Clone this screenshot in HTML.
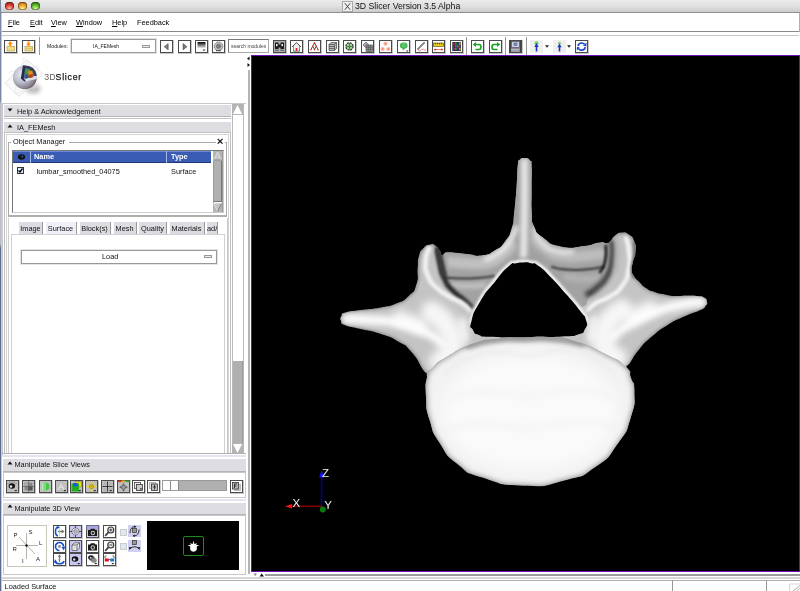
<!DOCTYPE html>
<html><head><meta charset="utf-8"><title>3D Slicer Version 3.5 Alpha</title>
<style>
html,body{margin:0;padding:0;}
body{width:800px;height:591px;overflow:hidden;background:#fff;position:relative;font-family:"Liberation Sans",sans-serif;font-size:7.35px;color:#111;}
.a{position:absolute;box-sizing:border-box;}
.t{position:absolute;white-space:nowrap;line-height:10px;will-change:opacity;}
#titlebar{left:0;top:0;width:800px;height:13px;background:linear-gradient(#ebebeb,#e0e0e0 50%,#cccccc);border-bottom:1px solid #8e8e8e;}
.tl{position:absolute;top:1.8px;width:8.6px;height:8.6px;border-radius:50%;box-shadow:0 0 0 0.7px rgba(40,20,20,.55) inset;}
#view3d{left:251px;top:55px;width:549px;height:517px;background:#000;border:1px solid #6a12b6;}
.bar{position:absolute;box-sizing:border-box;background:#dedee2;border-bottom:1px solid #b4b4b8;}
.tb{position:absolute;box-sizing:border-box;width:13px;height:13px;border:1px solid #4a4a4a;background:#fff;box-shadow:0.5px 0.5px 0 0.5px #c8c8c8;}
.sep{position:absolute;width:1px;background:#9a9a9a;}
.vl{position:absolute;width:1px;}
.hl{position:absolute;height:1px;}
.tab{position:absolute;box-sizing:border-box;top:222px;height:12px;background:#dcdce2;border-right:1px solid #9a9a9a;text-align:center;line-height:12px;}
</style></head><body>
<div id="titlebar" class="a"></div>
<div class="tl" style="left:5.4px;background:radial-gradient(circle at 50% 85%,#ffc0b0,#d8382c 50%,#6a1410);"></div>
<div class="tl" style="left:18.2px;background:radial-gradient(circle at 50% 85%,#fff4a0,#eca020 50%,#864808);"></div>
<div class="tl" style="left:31px;background:radial-gradient(circle at 50% 85%,#e0ffa0,#54b428 50%,#1c5408);"></div>
<svg class="a" style="left:342px;top:1px" width="11" height="11" viewBox="0 0 11 11"><rect x="0.5" y="0.5" width="10" height="10" fill="#f0f0f0" stroke="#a8a8a8" stroke-width="1"/><path d="M2.8 2.2 L8.2 8.8 M8.2 2.2 L2.8 8.8" stroke="#333" stroke-width="0.9"/></svg>
<div class="t" style="left:355px;top:1px;font-size:8.7px;line-height:11px;">3D Slicer Version 3.5 Alpha</div>
<div class="a" style="left:0;top:0;width:1px;height:591px;background:linear-gradient(#7a88a4 0,#7a88a4 100px,#b8bcc8 104px,#b8bcc8 244px,#5a6c92 248px,#5a6c92 591px);"></div>
<div class="a" style="left:1px;top:13px;width:1px;height:578px;background:#c8ccd4;"></div>
<div class="t" style="left:8px;top:17.8px;color:#000;"><u>F</u>ile</div>
<div class="t" style="left:30px;top:17.8px;color:#000;"><u>E</u>dit</div>
<div class="t" style="left:51px;top:17.8px;color:#000;"><u>V</u>iew</div>
<div class="t" style="left:76px;top:17.8px;color:#000;"><u>W</u>indow</div>
<div class="t" style="left:112px;top:17.8px;color:#000;"><u>H</u>elp</div>
<div class="t" style="left:137px;top:17.8px;color:#000;">Feedback</div>
<div class="hl" style="left:2px;top:31px;width:798px;background:#8a8a8a;"></div>
<div class="hl" style="left:2px;top:35px;width:797px;background:#c8c8c8;"></div>
<div class="vl" style="left:799px;top:13px;height:19px;background:#b0b0b0;"></div>
<div class="tb" id="tb0" style="left:4px;top:39.5px;"></div>
<svg class="a" style="left:4px;top:39.5px" width="13" height="13" viewBox="0 0 13 13"><rect x="3" y="6.5" width="7.5" height="4.5" fill="#f2dc82" stroke="#a89040" stroke-width="0.6"/><rect x="3" y="5.6" width="3" height="1.2" fill="#e8cc60"/><path d="M6.2 1.2 L8.8 4 L7.2 4 L7.2 6.2 L5.2 6.2 L5.2 4 L3.6 4Z" fill="#ff8a10"/></svg>
<div class="tb" id="tb1" style="left:22px;top:39.5px;"></div>
<svg class="a" style="left:22px;top:39.5px" width="13" height="13" viewBox="0 0 13 13"><rect x="3" y="6.5" width="7.5" height="4.5" fill="#f2dc82" stroke="#a89040" stroke-width="0.6"/><path d="M3 8.6 L10.5 8.6" stroke="#c8b050" stroke-width="0.6"/><path d="M6.5 6.6 L9 3.8 L7.5 3.8 L7.5 1.5 L5.5 1.5 L5.5 3.8 L4 3.8Z" fill="#ff8a10"/></svg>
<div class="tb" id="tb2" style="left:160px;top:39.5px;"></div>
<svg class="a" style="left:160px;top:39.5px" width="13" height="13" viewBox="0 0 13 13"><path d="M8.2 3.5 L4.2 6.7 L8.2 9.9Z" fill="#7a7a7a" stroke="#444" stroke-width="0.5"/></svg>
<div class="tb" id="tb3" style="left:178px;top:39.5px;"></div>
<svg class="a" style="left:178px;top:39.5px" width="13" height="13" viewBox="0 0 13 13"><path d="M5 3.5 L9 6.7 L5 9.9Z" fill="#7a7a7a" stroke="#444" stroke-width="0.5"/></svg>
<div class="tb" id="tb4" style="left:194.5px;top:39.5px;"></div>
<svg class="a" style="left:194.5px;top:39.5px" width="13" height="13" viewBox="0 0 13 13"><defs><linearGradient id="gd4" x1="0" y1="0" x2="0" y2="1"><stop offset="0" stop-color="#000"/><stop offset="1" stop-color="#f8f8f8"/></linearGradient></defs><rect x="2.5" y="2" width="8" height="6.5" fill="url(#gd4)"/><path d="M7.5 9.5 L10.5 9.5 L9 11.3Z" fill="#333"/></svg>
<div class="tb" id="tb5" style="left:212px;top:39.5px;"></div>
<svg class="a" style="left:212px;top:39.5px" width="13" height="13" viewBox="0 0 13 13"><circle cx="6.5" cy="6.3" r="4.3" fill="#c0c0c0"/><circle cx="6.5" cy="6.3" r="4.3" fill="none" stroke="#555" stroke-width="1" stroke-dasharray="1.2 1"/><circle cx="6.5" cy="6.3" r="2" fill="#888" stroke="#444" stroke-width="0.6"/><rect x="4" y="10" width="5" height="1.2" fill="#555"/></svg>
<div class="tb" id="tb6" style="left:272.5px;top:39.5px;"></div>
<svg class="a" style="left:272.5px;top:39.5px" width="13" height="13" viewBox="0 0 13 13"><rect x="1" y="1" width="11" height="11" fill="#b0b0b0"/><path d="M2 2.5 h3.5 v2 h2 v-2 h3.5 v8 h-3.5 v-3 h-2 v3 h-3.5Z" fill="#1a1a1a"/><rect x="3" y="4" width="1.6" height="2.2" fill="#e8e8e8"/><rect x="8.4" y="4" width="1.6" height="2.2" fill="#e8e8e8"/><rect x="2" y="9.2" width="3.5" height="0.7" fill="#ddd"/><rect x="7.5" y="9.2" width="3.5" height="0.7" fill="#ddd"/></svg>
<div class="tb" id="tb7" style="left:290px;top:39.5px;"></div>
<svg class="a" style="left:290px;top:39.5px" width="13" height="13" viewBox="0 0 13 13"><path d="M2.2 6.8 L6.5 2.8 L10.8 6.8 M3.5 6 L3.5 11 L9.5 11 L9.5 6" fill="none" stroke="#333" stroke-width="1"/><path d="M3.5 6 L6.5 3.5 L9.5 6 L9.5 10.5 L3.5 10.5Z" fill="#eef2e8"/><rect x="5.7" y="8" width="1.6" height="2.8" fill="#e02010"/></svg>
<div class="tb" id="tb8" style="left:308px;top:39.5px;"></div>
<svg class="a" style="left:308px;top:39.5px" width="13" height="13" viewBox="0 0 13 13"><path d="M6.5 3 L4.7 6.2 L3 9.5 M6.5 3 L8.3 6.2 L10 9.5 M4.7 6.2 L6.5 9.5 M8.3 6.2 L6.5 9.5" stroke="#222" stroke-width="0.8" fill="none"/><g fill="#d8301a"><circle cx="6.5" cy="3" r="0.9"/><circle cx="4.7" cy="6.2" r="0.8"/><circle cx="8.3" cy="6.2" r="0.8"/><circle cx="3" cy="9.8" r="0.8"/><circle cx="6.5" cy="9.8" r="0.8"/><circle cx="10" cy="9.8" r="0.8"/></g></svg>
<div class="tb" id="tb9" style="left:325.5px;top:39.5px;"></div>
<svg class="a" style="left:325.5px;top:39.5px" width="13" height="13" viewBox="0 0 13 13"><path d="M3 4.5 L5 2.5 L10.5 2.5 L10.5 8.5 L8.5 10.5 L3 10.5Z" fill="#b8b8b8" stroke="#444" stroke-width="0.7"/><path d="M3 6.5 L8.5 6.5 M3 8.5 L8.5 8.5 M3 4.5 L8.5 4.5 L10.5 2.5 M8.5 4.5 L8.5 10.5" stroke="#444" stroke-width="0.7" fill="none"/></svg>
<div class="tb" id="tb10" style="left:343px;top:39.5px;"></div>
<svg class="a" style="left:343px;top:39.5px" width="13" height="13" viewBox="0 0 13 13"><circle cx="6.5" cy="6.5" r="3.6" fill="#a8d898" stroke="#2a3a2a" stroke-width="1.3" stroke-dasharray="2 0.8"/><path d="M6.5 3.2 L6.5 9.8 M3.2 6.5 L9.8 6.5" stroke="#3a5a3a" stroke-width="0.7"/><circle cx="6.5" cy="6.5" r="1.2" fill="#4a7a4a"/></svg>
<div class="tb" id="tb11" style="left:361px;top:39.5px;"></div>
<svg class="a" style="left:361px;top:39.5px" width="13" height="13" viewBox="0 0 13 13"><path d="M2 5 L5 2 L7.5 4.5 L4.5 7.5Z" fill="#aaa" stroke="#555" stroke-width="0.6"/><rect x="5" y="5" width="6.5" height="6.5" fill="#999" stroke="#444" stroke-width="0.6"/><path d="M7.2 5 V11.5 M9.3 5 V11.5 M5 7.2 H11.5 M5 9.3 H11.5" stroke="#444" stroke-width="0.6"/></svg>
<div class="tb" id="tb12" style="left:378.5px;top:39.5px;"></div>
<svg class="a" style="left:378.5px;top:39.5px" width="13" height="13" viewBox="0 0 13 13"><g fill="#ffb8a4"><circle cx="6.5" cy="3.7" r="2.1"/><circle cx="3.7" cy="9" r="2.1"/><circle cx="9.3" cy="9" r="2.1"/></g><g fill="#f06a50"><circle cx="6.5" cy="3.7" r="0.8"/><circle cx="3.7" cy="9" r="0.8"/><circle cx="9.3" cy="9" r="0.8"/></g></svg>
<div class="tb" id="tb13" style="left:396.5px;top:39.5px;"></div>
<svg class="a" style="left:396.5px;top:39.5px" width="13" height="13" viewBox="0 0 13 13"><path d="M3 5.5 Q3 2.5 6.5 2.5 Q10.5 2 10.5 5.5 Q10.8 8 8 8.5 L6 10.5 L5.5 8.5 Q3 8.5 3 5.5Z" fill="#38b048"/><path d="M4.5 4 H9.5 M4 6 H10 M6 3 V8 M8 3 V8" stroke="#88d890" stroke-width="0.5"/><path d="M9 10.5 L11.5 10.5 L10.2 12Z" fill="#333"/></svg>
<div class="tb" id="tb14" style="left:414.5px;top:39.5px;"></div>
<svg class="a" style="left:414.5px;top:39.5px" width="13" height="13" viewBox="0 0 13 13"><path d="M2.5 9.5 L9.5 2.5" stroke="#444" stroke-width="1.6"/><path d="M3 9.2 L9.2 3" stroke="#ddd" stroke-width="0.6"/><path d="M3 10.8 Q5 11.5 6 10 T9 9.5 T11 10.5" stroke="#f04060" stroke-width="0.6" fill="none"/></svg>
<div class="tb" id="tb15" style="left:432px;top:39.5px;"></div>
<svg class="a" style="left:432px;top:39.5px" width="13" height="13" viewBox="0 0 13 13"><rect x="1.5" y="3" width="10" height="3.5" fill="#e8d020" stroke="#554400" stroke-width="0.6"/><path d="M3.5 3 V4.5 M5.5 3 V4.5 M7.5 3 V4.5 M9.5 3 V4.5" stroke="#332200" stroke-width="0.6"/><path d="M2 9.5 H11" stroke="#e02010" stroke-width="0.6"/><path d="M2 10.3 L3.2 8.2 L4.4 10.3Z M8.6 10.3 L9.8 8.2 L11 10.3Z" fill="#e02010"/></svg>
<div class="tb" id="tb16" style="left:449.5px;top:39.5px;"></div>
<svg class="a" style="left:449.5px;top:39.5px" width="13" height="13" viewBox="0 0 13 13"><rect x="2.3" y="2" width="8.6" height="9" fill="#282838"/><rect x="3" y="2.5" width="1.7" height="2.3" fill="#c02020"/><rect x="5" y="2.5" width="1.7" height="2.3" fill="#20a020"/><rect x="7" y="2.5" width="1.7" height="2.3" fill="#2040c0"/><rect x="9" y="2.5" width="1.7" height="2.3" fill="#c0a020"/><rect x="3" y="5.2" width="1.7" height="2.3" fill="#802080"/><rect x="5" y="5.2" width="1.7" height="2.3" fill="#208080"/><rect x="7" y="5.2" width="1.7" height="2.3" fill="#c06020"/><rect x="9" y="5.2" width="1.7" height="2.3" fill="#4040a0"/><rect x="3" y="7.9" width="1.7" height="2.3" fill="#a02060"/><rect x="5" y="7.9" width="1.7" height="2.3" fill="#20a060"/><rect x="7" y="7.9" width="1.7" height="2.3" fill="#6020a0"/><rect x="9" y="7.9" width="1.7" height="2.3" fill="#a0a020"/></svg>
<div class="tb" id="tb17" style="left:471px;top:39.5px;"></div>
<svg class="a" style="left:471px;top:39.5px" width="13" height="13" viewBox="0 0 13 13"><path d="M3.5 4.5 H8 Q10 4.5 10 7 Q10 9.5 8 9.5 H4.5" fill="none" stroke="#18a028" stroke-width="1.6"/><path d="M1.8 4.5 L5 2 L5 7Z" fill="#18a028"/></svg>
<div class="tb" id="tb18" style="left:489px;top:39.5px;"></div>
<svg class="a" style="left:489px;top:39.5px" width="13" height="13" viewBox="0 0 13 13"><path d="M9.5 4.5 H5 Q3 4.5 3 7 Q3 9.5 5 9.5 H8.5" fill="none" stroke="#18a028" stroke-width="1.6"/><path d="M11.2 4.5 L8 2 L8 7Z" fill="#18a028"/></svg>
<div class="tb" id="tb19" style="left:509px;top:39.5px;"></div>
<svg class="a" style="left:509px;top:39.5px" width="13" height="13" viewBox="0 0 13 13"><rect x="1" y="1" width="11" height="11" fill="#8a8a92"/><rect x="2.5" y="1.5" width="8" height="6" fill="#c8d0e8" stroke="#445" stroke-width="0.6"/><rect x="5" y="3" width="3" height="2.5" fill="#8898c0" stroke="#334" stroke-width="0.4"/><rect x="0.8" y="1" width="1.2" height="11" fill="#444"/><rect x="11" y="1" width="1.2" height="11" fill="#444"/><path d="M2.5 9.5 H10.5 M2.5 11 H10.5" stroke="#dde" stroke-width="0.9" stroke-dasharray="1.2 0.8"/></svg>
<svg class="a" style="left:530px;top:39.5px" width="13" height="13" viewBox="0 0 13 13"><rect x="0" y="0" width="13" height="13" fill="#efefef"/><circle cx="6.5" cy="3.2" r="2" fill="#58d048" opacity="0.9"/><path d="M6.5 3 L8.6 7 L7.3 7 L7.3 11.5 L5.7 11.5 L5.7 7 L4.4 7Z" fill="#1838c0"/></svg>
<svg class="a" style="left:544.5px;top:45px" width="4" height="3" viewBox="0 0 4 3"><path d="M0 0.3 L4 0.3 L2 2.8Z" fill="#222"/></svg>
<svg class="a" style="left:552.5px;top:39.5px" width="13" height="13" viewBox="0 0 13 13"><rect x="0" y="0" width="13" height="13" fill="#efefef"/><circle cx="6.5" cy="3.2" r="1.4" fill="#88c078" opacity="0.9"/><path d="M6.5 3.5 L8.6 7.3 L7.3 7.3 L7.3 11.5 L5.7 11.5 L5.7 7.3 L4.4 7.3Z" fill="#1838c0"/></svg>
<svg class="a" style="left:567.0px;top:45px" width="4" height="3" viewBox="0 0 4 3"><path d="M0 0.3 L4 0.3 L2 2.8Z" fill="#222"/></svg>
<div class="tb" id="tb22" style="left:575px;top:39.5px;"></div>
<svg class="a" style="left:575px;top:39.5px" width="13" height="13" viewBox="0 0 13 13"><path d="M3 6 Q3.5 3 6.8 3 Q8.5 3 9.5 4.3" fill="none" stroke="#1848c8" stroke-width="1.7"/><path d="M8 5.5 L11.5 2.8 L11.3 6.5Z" fill="#1848c8"/><path d="M10.3 7.2 Q9.8 10.2 6.5 10.2 Q4.8 10.2 3.8 8.9" fill="none" stroke="#1848c8" stroke-width="1.7"/><path d="M5.2 7.7 L1.7 10.4 L1.9 6.7Z" fill="#1848c8"/></svg>
<div class="sep" style="left:38.5px;top:37px;height:18px;"></div>
<div class="sep" style="left:465.5px;top:37px;height:18px;"></div>
<div class="sep" style="left:504.5px;top:37px;height:18px;"></div>
<div class="sep" style="left:525.5px;top:37px;height:18px;"></div>
<div class="t" style="left:47px;top:41px;font-size:5px;letter-spacing:0.1px;">Modules:</div>
<div class="a" style="left:71px;top:39px;width:85px;height:14px;border:1px solid #9a9a9a;box-shadow:0 0 0 1px #e0e0e0;background:#fff;"></div>
<div class="t" style="left:93px;top:41px;font-size:5px;">IA_FEMesh</div>
<div class="a" style="left:142px;top:45px;width:8px;height:3px;border:1px solid #999;background:#eee;"></div>
<div class="a" style="left:228px;top:39px;width:41px;height:14px;border:1px solid #aaa;border-top-color:#777;border-left-color:#777;background:#fff;"></div>
<div class="t" style="left:231px;top:41px;font-size:5px;color:#444;">search modules</div>
<div class="vl" style="left:248px;top:70px;height:504px;background:#b4b4b4;width:2px;"></div>
<svg class="a" style="left:245px;top:55px" width="6" height="16" viewBox="0 0 6 16"><path d="M4.5 1.5 L2 3.5 L4.5 5.5Z M2.5 8 L5 10 L2.5 12Z" fill="#111"/></svg>
<svg class="a" style="left:0;top:54px" width="90" height="50" viewBox="0 0 90 50"><defs><radialGradient id="gSph" cx="0.36" cy="0.36" r="0.72"><stop offset="0" stop-color="#e8eaf2"/><stop offset="0.5" stop-color="#b8bccc"/><stop offset="0.82" stop-color="#8c8490"/><stop offset="1" stop-color="#5a4c50"/></radialGradient><filter id="lgb" x="-50%" y="-50%" width="200%" height="200%"><feGaussianBlur stdDeviation="2"/></filter><filter id="lgc" x="-50%" y="-50%" width="200%" height="200%"><feGaussianBlur stdDeviation="0.5"/></filter></defs><ellipse cx="33" cy="35" rx="7.5" ry="4.5" fill="#888" opacity="0.6" filter="url(#lgb)"/><path d="M5 29.5 L27 5.5 L43.3 20.2 L19 42.7Z" fill="#f8f8f8" stroke="#d4d4d4" stroke-width="0.5"/><path d="M9 18 L38 12 L33 40 Z" fill="none" stroke="#dcdcdc" stroke-width="0.5"/><path d="M14 40 L24 3 L40 32 Z" fill="none" stroke="#e0e0e0" stroke-width="0.5"/><g filter="url(#lgc)"><circle cx="24.8" cy="23.4" r="11.9" fill="url(#gSph)"/><path d="M23 11.5 Q35 10.8 36.7 21.5 L36.6 25 L25 27.5 L21.4 24.5 Z" fill="#dcdee8"/><path d="M23 11.5 Q35 10.8 36.7 21.5 L33.2 22.5 L25 24.8 L22 24 Z" fill="#66709a"/><path d="M23 11.5 Q35 10.8 36.7 21.5 L34.3 21.9 Q33 14.3 24.6 14.2 Z" fill="#343c5a"/><path d="M23 11.5 L25.2 13.5 L23.8 24.3 L25.8 27.2 L24.4 27.6 L20.8 24.6 Z" fill="#262e4c"/><path d="M25.3 14.8 L32.6 16.5 L32.6 23.2 L25.3 24.4Z" fill="#5a6a30"/><path d="M25.3 14.8 L29 15.6 L28.5 20 L25.3 21Z" fill="#30a040"/><path d="M28.2 16.5 L32.6 17.2 L32.6 21 L28.6 21.5Z" fill="#f08820"/><path d="M29.5 20.5 L32.6 20.3 L32.6 23.2 L29.6 23.7Z" fill="#d83018"/><path d="M25.3 20.5 L27.8 21.5 L27.8 24 L25.3 24.4Z" fill="#2848b8"/></g></svg>
<div class="t" style="left:44.3px;top:70.5px;font-size:8.8px;line-height:12px;color:#666;">3D<span style="color:#1a1a1a;letter-spacing:0.75px;-webkit-text-stroke:0.25px #1a1a1a;">Slicer</span></div>
<div class="a" style="left:2px;top:103px;width:244px;height:352px;border:1px solid #c8c8c8;border-right:none;border-bottom:none;"></div>
<div class="bar" style="left:4px;top:105px;width:227px;height:12px;"></div>
<div class="hl" style="left:4px;top:118px;width:227px;background:#c4c4c4;"></div>
<div class="bar" style="left:4px;top:122px;width:227px;height:10px;border-bottom:none;"></div>
<svg class="a" style="left:7px;top:108px" width="6" height="4" viewBox="0 0 6 4"><path d="M0.5 0.5 L5.5 0.5 L3 3.5Z" fill="#111"/></svg>
<div class="t" style="left:17px;top:106.5px;">Help &amp; Acknowledgement</div>
<svg class="a" style="left:7px;top:124px" width="6" height="4" viewBox="0 0 6 4"><path d="M0.5 3.5 L5.5 3.5 L3 0.5Z" fill="#111"/></svg>
<div class="t" style="left:17px;top:123px;">IA_FEMesh</div>
<div class="a" style="left:232px;top:104px;width:12px;height:350px;border:1px solid #b8b8b8;background:#fff;"></div>
<div class="a" style="left:232px;top:104px;width:11px;height:11px;background:#b4b4b4;"></div>
<svg class="a" style="left:232px;top:104px" width="11" height="11" viewBox="0 0 11 11"><path d="M5.5 1 L10 10 L1 10Z" fill="#fff"/></svg>
<div class="a" style="left:233px;top:361px;width:10px;height:82px;background:#b0b0b0;border-right:1px solid #999;"></div>
<div class="a" style="left:232px;top:443px;width:11px;height:11px;background:#b4b4b4;"></div>
<svg class="a" style="left:232px;top:443px" width="11" height="11" viewBox="0 0 11 11"><path d="M1 1 L10 1 L5.5 10Z" fill="#fff"/></svg>
<div class="a" style="left:4px;top:132px;width:227px;height:322px;border:1px solid #c0c0c0;"></div>
<div class="a" style="left:6px;top:134px;width:223px;height:320px;border:1px solid #d4d4d4;border-bottom:none;"></div>
<div class="a" style="left:8px;top:142px;width:219px;height:75px;border:1px solid #aaa;border-bottom:2px solid #b0b0b0;"></div>
<div class="a" style="left:11px;top:138px;width:58px;height:8px;background:#fff;"></div>
<div class="t" style="left:13px;top:137px;">Object Manager</div>
<div class="a" style="left:216px;top:138px;width:9px;height:8px;background:#fff;"></div>
<div class="t" style="left:216.7px;top:135.6px;font-size:11.5px;font-weight:bold;">&#215;</div>
<div class="a" style="left:12px;top:150px;width:212px;height:63px;border:1px solid #777;border-right-color:#ccc;border-bottom-color:#ccc;"></div>
<div class="a" style="left:13px;top:151px;width:198px;height:12px;background:#3a5cb4;border-top:1px solid #6a88d8;border-bottom:1px solid #203878;"></div>
<div class="vl" style="left:30px;top:151px;height:12px;background:#a8b8e8;"></div>
<div class="vl" style="left:166px;top:151px;height:12px;background:#a8b8e8;"></div>
<svg class="a" style="left:17px;top:153px" width="9" height="8" viewBox="0 0 9 8"><ellipse cx="4.5" cy="4" rx="3.6" ry="2.8" fill="#111"/><circle cx="5.2" cy="3.6" r="1" fill="#3a5cb4"/></svg>
<div class="t" style="left:34px;top:152px;color:#fff;font-weight:bold;">Name</div>
<div class="t" style="left:171px;top:152px;color:#fff;font-weight:bold;">Type</div>
<div class="a" style="left:17px;top:167px;width:7px;height:7px;border:1px solid #333;background:#d8e8ff;"></div>
<svg class="a" style="left:17px;top:167px" width="7" height="7" viewBox="0 0 7 7"><path d="M1.5 3.5 L3 5 L5.5 1.5" stroke="#000" stroke-width="1.3" fill="none"/></svg>
<div class="t" style="left:36.5px;top:166.6px;">lumbar_smoothed_04075</div>
<div class="t" style="left:171px;top:166.6px;">Surface</div>
<div class="a" style="left:213px;top:151px;width:10px;height:61px;background:#fff;border:1px solid #999;"></div>
<div class="a" style="left:213px;top:151px;width:9px;height:10px;background:#b4b4b4;"></div>
<svg class="a" style="left:213px;top:151px" width="9" height="10" viewBox="0 0 9 10"><path d="M4.5 1 L8.5 9 L0.5 9Z" fill="#c6c6c6" stroke="#eee" stroke-width="0.6"/><path d="M8.5 9 L0.5 9" stroke="#666" stroke-width="0.8"/></svg>
<div class="a" style="left:214px;top:161px;width:8px;height:41px;background:#b0b0b0;border-right:1px solid #777;border-bottom:1px solid #777;"></div>
<div class="a" style="left:213px;top:203px;width:9px;height:9px;background:#b4b4b4;"></div>
<svg class="a" style="left:213px;top:203px" width="9" height="9" viewBox="0 0 9 9"><path d="M0.5 0.5 L8.5 0.5 L4.5 8.5Z" fill="#c6c6c6" stroke="#eee" stroke-width="0.6"/><path d="M8.5 0.5 L4.5 8.5" stroke="#666" stroke-width="0.8"/></svg>
<div class="tab" style="left:19px;width:24px;background:#dcdce2;"></div>
<div class="t" style="left:19px;width:23px;top:223.5px;text-align:center;overflow:hidden;">Image</div>
<div class="tab" style="left:45.5px;width:31px;background:#efeffa;"></div>
<div class="t" style="left:45.5px;width:30px;top:223.5px;text-align:center;overflow:hidden;">Surface</div>
<div class="tab" style="left:79.5px;width:31px;background:#dcdce2;"></div>
<div class="t" style="left:79.5px;width:30px;top:223.5px;text-align:center;overflow:hidden;">Block(s)</div>
<div class="tab" style="left:113.5px;width:23px;background:#dcdce2;"></div>
<div class="t" style="left:113.5px;width:22px;top:223.5px;text-align:center;overflow:hidden;">Mesh</div>
<div class="tab" style="left:139px;width:28px;background:#dcdce2;"></div>
<div class="t" style="left:139px;width:27px;top:223.5px;text-align:center;overflow:hidden;">Quality</div>
<div class="tab" style="left:169.5px;width:35px;background:#dcdce2;"></div>
<div class="t" style="left:169.5px;width:34px;top:223.5px;text-align:center;overflow:hidden;">Materials</div>
<div class="tab" style="left:207px;width:11px;background:#dcdce2;"></div>
<div class="t" style="left:207px;width:10px;top:223.5px;text-align:center;overflow:hidden;">ad/</div>
<div class="a" style="left:11px;top:234px;width:214px;height:220px;border:1px solid #d0d0d0;border-bottom:none;"></div>
<div class="vl" style="left:227px;top:218px;height:236px;background:#c8c8c8;"></div>
<div class="vl" style="left:8px;top:218px;height:236px;background:#d0d0d0;"></div>
<div class="a" style="left:21px;top:250px;width:196px;height:14px;border:1px solid #999;box-shadow:0 0 0 1px #e4e4e4;background:#fff;"></div>
<div class="t" style="left:102px;top:252px;">Load</div>
<div class="a" style="left:204px;top:255px;width:8px;height:3px;border:1px solid #999;background:#eee;"></div>
<div class="hl" style="left:2px;top:453px;width:244px;background:#b0b0b0;"></div>
<div class="hl" style="left:2px;top:455px;width:244px;height:2px;background:#e4e4f0;"></div>
<div class="bar" style="left:3px;top:459px;width:243px;height:12.5px;"></div>
<svg class="a" style="left:7px;top:461px" width="6" height="4" viewBox="0 0 6 4"><path d="M0.5 3.5 L5.5 3.5 L3 0.5Z" fill="#111"/></svg>
<div class="t" style="left:14.5px;top:460px;">Manipulate Slice Views</div>
<div class="a" style="left:3px;top:472px;width:243px;height:26px;border:1px solid #c8c8c8;"></div>
<div class="tb" id="sb0" style="left:6px;top:479.5px;background:#c0c0c0;"></div>
<svg class="a" style="left:6px;top:479.5px" width="13" height="13" viewBox="0 0 13 13"><ellipse cx="5.8" cy="6" rx="3.2" ry="2.8" fill="#111"/><path d="M2.5 4 L1.5 3 M4 2.8 L3.5 1.6 M6 2.5 L6 1.2 M8 3 L8.8 1.8 M9.3 4.3 L10.5 3.5" stroke="#333" stroke-width="0.5"/><circle cx="5" cy="6.5" r="1.3" fill="#e8e8e8"/><path d="M8.3 10 L11.3 10 L9.8 11.6Z" fill="#222"/></svg>
<div class="tb" id="sb1" style="left:22px;top:479.5px;background:#c0c0c0;"></div>
<svg class="a" style="left:22px;top:479.5px" width="13" height="13" viewBox="0 0 13 13"><rect x="2.5" y="2.5" width="8" height="8" fill="#888"/><rect x="2.5" y="2.5" width="4" height="4" fill="#aaa"/><rect x="6.5" y="6.5" width="4" height="4" fill="#555"/><path d="M6.5 1 V12 M1 6.5 H12" stroke="#444" stroke-width="0.5"/></svg>
<div class="tb" id="sb2" style="left:39px;top:479.5px;background:#c0c0c0;"></div>
<svg class="a" style="left:39px;top:479.5px" width="13" height="13" viewBox="0 0 13 13"><path d="M4 2.5 H7 Q10.5 3 10.5 6.5 Q10.5 10 7 10.5 H4Z" fill="#48c848"/><path d="M5 2.5 V10.5 M6.3 2.5 V10.5" stroke="#c8f0c8" stroke-width="0.6"/><rect x="3" y="2.5" width="1.6" height="8" fill="#b8e0b8"/></svg>
<div class="tb" id="sb3" style="left:54.5px;top:479.5px;background:#c0c0c0;"></div>
<svg class="a" style="left:54.5px;top:479.5px" width="13" height="13" viewBox="0 0 13 13"><text x="6.2" y="10" font-family="Liberation Sans, sans-serif" font-size="9.5" fill="#f0f0f0" text-anchor="middle">A</text><path d="M8.3 10 L11.3 10 L9.8 11.6Z" fill="#222"/></svg>
<div class="tb" id="sb4" style="left:70px;top:479.5px;background:#c0c0c0;"></div>
<svg class="a" style="left:70px;top:479.5px" width="13" height="13" viewBox="0 0 13 13"><rect x="5" y="1.5" width="6.5" height="5.5" fill="#e8d818" stroke="#665" stroke-width="0.4"/><rect x="1.5" y="3.5" width="7.5" height="8" fill="#20b020"/><rect x="3.5" y="3" width="4" height="3.5" fill="#1858d8"/><path d="M8.3 10 L11.3 10 L9.8 11.6Z" fill="#222"/></svg>
<div class="tb" id="sb5" style="left:85px;top:479.5px;background:#c0c0c0;"></div>
<svg class="a" style="left:85px;top:479.5px" width="13" height="13" viewBox="0 0 13 13"><path d="M6.5 1.5 V11.5 M1.5 6.5 H11.5" stroke="#f0d020" stroke-width="1.8"/><circle cx="6.5" cy="6.5" r="2" fill="#f0d020" stroke="#554" stroke-width="0.5"/><circle cx="6.5" cy="6.5" r="0.8" fill="#888"/><path d="M8.3 10 L11.3 10 L9.8 11.6Z" fill="#222"/></svg>
<div class="tb" id="sb6" style="left:100.5px;top:479.5px;background:#c0c0c0;"></div>
<svg class="a" style="left:100.5px;top:479.5px" width="13" height="13" viewBox="0 0 13 13"><path d="M6.5 1.5 V11.5 M1.5 6.5 H11.5" stroke="#222" stroke-width="0.9"/><path d="M4 1.5 V11.5 M9 1.5 V11.5 M1.5 4 H11.5 M1.5 9 H11.5" stroke="#999" stroke-width="0.4"/><path d="M8.3 10 L11.3 10 L9.8 11.6Z" fill="#222"/></svg>
<div class="tb" id="sb7" style="left:116.5px;top:479.5px;background:#c0c0c0;"></div>
<svg class="a" style="left:116.5px;top:479.5px" width="13" height="13" viewBox="0 0 13 13"><rect x="0.5" y="0.5" width="4" height="1.6" fill="#d83020"/><rect x="4.5" y="0.5" width="4" height="1.6" fill="#d8b020"/><rect x="8.5" y="0.5" width="4" height="1.6" fill="#40a040"/><circle cx="6.5" cy="7.2" r="2.2" fill="#999" stroke="#444" stroke-width="0.6"/><path d="M6.5 3 L7.6 4.5 H5.4Z M6.5 11.4 L7.6 9.9 H5.4Z M2.3 7.2 L3.8 6.1 V8.3Z M10.7 7.2 L9.2 6.1 V8.3Z" fill="#444"/></svg>
<div class="tb" id="sb8" style="left:131.5px;top:479.5px;background:#fff;"></div>
<svg class="a" style="left:131.5px;top:479.5px" width="13" height="13" viewBox="0 0 13 13"><rect x="2.5" y="2.5" width="6" height="6" fill="#eee" stroke="#444" stroke-width="0.8"/><rect x="4.5" y="4.5" width="6" height="6" fill="#ccc" stroke="#333" stroke-width="0.8"/><rect x="8" y="8" width="1.8" height="1.8" fill="#555"/></svg>
<div class="tb" id="sb9" style="left:147px;top:479.5px;background:#fff;"></div>
<svg class="a" style="left:147px;top:479.5px" width="13" height="13" viewBox="0 0 13 13"><rect x="2.5" y="2.5" width="6" height="6" fill="#ddd" stroke="#aaa" stroke-width="0.8"/><rect x="4.5" y="4" width="6" height="6.5" fill="#bbb" stroke="#333" stroke-width="0.8"/><path d="M7.5 5 V9.5 M6 7 H9" stroke="#222" stroke-width="0.8"/></svg>
<div class="tb" id="sb10" style="left:230px;top:479.5px;background:#fff;"></div>
<svg class="a" style="left:230px;top:479.5px" width="13" height="13" viewBox="0 0 13 13"><rect x="4.5" y="4.5" width="6" height="6" fill="#ccc" stroke="#999" stroke-width="0.6"/><rect x="2.5" y="2.5" width="6" height="6.5" fill="#bbb" stroke="#333" stroke-width="0.8"/><path d="M4.5 4 V8 M4.5 4 H7 M4.5 6 H6.5" stroke="#111" stroke-width="0.8" fill="none"/></svg>
<div class="a" style="left:161.5px;top:480px;width:65px;height:11px;background:#b0b0b0;border:1px solid #999;"></div>
<div class="a" style="left:162.5px;top:481px;width:8px;height:9px;background:#fff;border-right:1px solid #888;"></div>
<div class="a" style="left:171px;top:481px;width:8px;height:9px;background:#fff;border-right:1px solid #888;"></div>
<div class="hl" style="left:3px;top:499px;width:243px;height:2px;background:#e4e4f0;"></div>
<div class="bar" style="left:3px;top:502.8px;width:243px;height:12px;"></div>
<svg class="a" style="left:7px;top:504px" width="6" height="4" viewBox="0 0 6 4"><path d="M0.5 3.5 L5.5 3.5 L3 0.5Z" fill="#111"/></svg>
<div class="t" style="left:14.5px;top:503.6px;">Manipulate 3D View</div>
<div class="a" style="left:3px;top:515px;width:243px;height:60px;border:1px solid #c8c8c8;"></div>
<div class="a" style="left:7px;top:525px;width:40px;height:42px;border:1px solid #c8c8b8;background:#fff;"></div>
<svg class="a" style="left:7px;top:525px" width="40" height="42" viewBox="0 0 40 42"><path d="M19.5 8 L19.5 34 M9 20.5 L31 20.5 M12 12 L28 29" stroke="#a0a090" stroke-width="0.8" fill="none"/><circle cx="19.5" cy="20.5" r="1.2" fill="#111"/><g font-family="Liberation Sans, sans-serif" font-size="6" fill="#222"><text x="6.5" y="11.5">P</text><text x="21.5" y="8.5">S</text><text x="32" y="20">L</text><text x="5.5" y="26">R</text><text x="15" y="37.5">I</text><text x="29" y="35.5">A</text></g></svg>
<div class="tb" id="vb00" style="left:53px;top:525.2px;background:#fff;"></div>
<svg class="a" style="left:53px;top:525.2px" width="13" height="13" viewBox="0 0 13 13"><path d="M5 2 Q2.5 2.5 2.5 6.5 Q2.5 10.5 5 11" fill="none" stroke="#1850c8" stroke-width="1.6"/><path d="M4 0.8 L7 2.2 L4.3 4Z" fill="#1850c8"/><path d="M5 6.5 H11" stroke="#777" stroke-width="1.4"/><path d="M8.5 4.5 L11.5 6.5 L8.5 8.5Z" fill="#777"/><path d="M6.5 1.5 V11.5" stroke="#aaa" stroke-width="0.5"/></svg>
<div class="tb" id="vb10" style="left:69.3px;top:525.2px;background:#c8c8f0;"></div>
<svg class="a" style="left:69.3px;top:525.2px" width="13" height="13" viewBox="0 0 13 13"><circle cx="6.5" cy="6.5" r="3.6" fill="#d8d8e8" stroke="#444" stroke-width="0.9" stroke-dasharray="1.3 0.9"/><circle cx="6.5" cy="6.5" r="1.8" fill="#b8b8c8" stroke="#666" stroke-width="0.5"/><path d="M6.5 0.8 V3 M6.5 10 V12.2 M0.8 6.5 H3 M10 6.5 H12.2" stroke="#333" stroke-width="0.8"/></svg>
<div class="tb" id="vb20" style="left:86px;top:525.2px;background:#c8c8f0;"></div>
<svg class="a" style="left:86px;top:525.2px" width="13" height="13" viewBox="0 0 13 13"><rect x="0" y="0" width="13" height="5" fill="#8888c8" opacity="0.5"/><path d="M2 5 H4 L5 3.8 H8.5 L9.5 5 H11 V11 H2Z" fill="#1a1a1a"/><circle cx="6.8" cy="8" r="2.2" fill="#d0d0d0"/><circle cx="6.8" cy="8" r="1.2" fill="#222"/></svg>
<div class="tb" id="vb30" style="left:102.5px;top:525.2px;background:#fff;"></div>
<svg class="a" style="left:102.5px;top:525.2px" width="13" height="13" viewBox="0 0 13 13"><circle cx="7.8" cy="5" r="3" fill="#e8e8e8" stroke="#333" stroke-width="1.1"/><path d="M5.6 7.2 L2.2 10.8" stroke="#444" stroke-width="1.8"/><path d="M6.3 5 H9.3 M7.8 3.5 V6.5" stroke="#222" stroke-width="0.8"/></svg>
<div class="tb" id="vb01" style="left:53px;top:539.6px;background:#fff;"></div>
<svg class="a" style="left:53px;top:539.6px" width="13" height="13" viewBox="0 0 13 13"><path d="M10.5 6.5 A4 4 0 1 0 6.5 10.5" fill="none" stroke="#1850c8" stroke-width="1.7"/><path d="M8.5 7 L10.6 10.4 L12.4 6.5Z" fill="#1850c8"/><circle cx="6.5" cy="6.5" r="1.4" fill="#888"/></svg>
<div class="tb" id="vb11" style="left:69.3px;top:539.6px;background:#c8c8f0;"></div>
<svg class="a" style="left:69.3px;top:539.6px" width="13" height="13" viewBox="0 0 13 13"><path d="M3 5 L5.5 2.8 L10.5 2.8 L10.5 8 L8 10.5 L3 10.5Z" fill="#ececf8" stroke="#555" stroke-width="0.8"/><path d="M3 5 H8 V10.5 M8 5 L10.5 2.8" stroke="#555" stroke-width="0.8" fill="none"/><path d="M5.5 2.8 V8 H10.5 M5.5 8 L3 10.5" stroke="#aaa" stroke-width="0.4" fill="none"/></svg>
<div class="tb" id="vb21" style="left:86px;top:539.6px;background:#fff;"></div>
<svg class="a" style="left:86px;top:539.6px" width="13" height="13" viewBox="0 0 13 13"><path d="M2 4.5 H4 L5 3.3 H8.5 L9.5 4.5 H11 V10.5 H2Z" fill="#1a1a1a"/><circle cx="6.8" cy="7.5" r="2.2" fill="#d0d0d0"/><circle cx="6.8" cy="7.5" r="1.2" fill="#222"/></svg>
<div class="tb" id="vb31" style="left:102.5px;top:539.6px;background:#fff;"></div>
<svg class="a" style="left:102.5px;top:539.6px" width="13" height="13" viewBox="0 0 13 13"><circle cx="7.8" cy="5" r="3" fill="#e8e8e8" stroke="#333" stroke-width="1.1"/><path d="M5.6 7.2 L2.2 10.8" stroke="#444" stroke-width="1.8"/><path d="M6.3 5 H9.3" stroke="#222" stroke-width="0.8"/></svg>
<div class="tb" id="vb02" style="left:53px;top:553.4px;background:#fff;"></div>
<svg class="a" style="left:53px;top:553.4px" width="13" height="13" viewBox="0 0 13 13"><path d="M2 8 Q2.5 10.8 6.5 10.8 Q10.5 10.8 11 8" fill="none" stroke="#1850c8" stroke-width="1.6"/><path d="M0.8 9.5 L2.2 6.3 L4.2 9.2Z" fill="#1850c8"/><path d="M6.5 2 V9" stroke="#777" stroke-width="1.2"/><path d="M4.8 4 L6.5 1.2 L8.2 4Z" fill="#777"/><circle cx="6.5" cy="6.5" r="1.1" fill="#999"/></svg>
<div class="tb" id="vb12" style="left:69.3px;top:553.4px;background:#c8c8f0;"></div>
<svg class="a" style="left:69.3px;top:553.4px" width="13" height="13" viewBox="0 0 13 13"><ellipse cx="6" cy="6" rx="3.3" ry="2.8" fill="#111"/><circle cx="5.2" cy="6.5" r="1.2" fill="#ddd"/><path d="M8.3 10 L11.3 10 L9.8 11.6Z" fill="#222"/></svg>
<div class="tb" id="vb22" style="left:86px;top:553.4px;background:#fff;"></div>
<svg class="a" style="left:86px;top:553.4px" width="13" height="13" viewBox="0 0 13 13"><ellipse cx="5" cy="4.5" rx="2.8" ry="2.3" fill="#111"/><ellipse cx="6.5" cy="6" rx="2.8" ry="2.3" fill="#555"/><ellipse cx="8" cy="7.5" rx="2.8" ry="2.3" fill="#888"/><circle cx="4.6" cy="4.6" r="0.9" fill="#ddd"/><path d="M8.3 10 L11.3 10 L9.8 11.6Z" fill="#222"/></svg>
<div class="tb" id="vb32" style="left:102.5px;top:553.4px;background:#fff;"></div>
<svg class="a" style="left:102.5px;top:553.4px" width="13" height="13" viewBox="0 0 13 13"><path d="M2 3 V5.5 M11 3 V5.5 M2 3 H3.5 M11 3 H9.5" stroke="#333" stroke-width="0.7" fill="none"/><rect x="1.8" y="5.5" width="4" height="3" fill="#e01020"/><rect x="7.2" y="5.5" width="4" height="3" fill="#1878d8"/><path d="M5.8 6.5 H7.2" stroke="#333" stroke-width="0.8"/><path d="M8.3 10 L11.3 10 L9.8 11.6Z" fill="#222"/></svg>
<div class="a" style="left:119.5px;top:528.5px;width:7px;height:7px;border:1px solid #ccc;background:#dce8f8;"></div>
<div class="a" style="left:119.5px;top:542.5px;width:7px;height:7px;border:1px solid #ccc;background:#dce8f8;"></div>
<div class="a" style="left:128.3px;top:525.2px;width:12.5px;height:12px;background:#d0d0f0;"></div>
<svg class="a" style="left:128.2px;top:524.9000000000001px" width="13" height="13" viewBox="0 0 13 13"><rect x="4.5" y="3.5" width="4" height="4" fill="#999" stroke="#333" stroke-width="0.7"/><path d="M2 8 Q2 2 7 1.5 M11 4.5 Q11 10.5 6 11" fill="none" stroke="#222" stroke-width="0.9"/><path d="M6 0.5 L8.5 1.6 L6.5 3.2Z M7 12 L4.5 10.9 L6.5 9.3Z" fill="#222"/></svg>
<div class="a" style="left:128.3px;top:539.5px;width:12.5px;height:12px;background:#d0d0f0;"></div>
<svg class="a" style="left:128.2px;top:539.2px" width="13" height="13" viewBox="0 0 13 13"><rect x="4.5" y="1.5" width="4" height="4" fill="#999" stroke="#333" stroke-width="0.7"/><path d="M2 9.5 Q6.5 6 11 9.5" fill="none" stroke="#222" stroke-width="1"/><path d="M0.8 8 L3.5 8.5 L1.5 11Z M12.2 8 L9.5 8.5 L11.5 11Z" fill="#222"/></svg>
<div class="a" style="left:147px;top:521px;width:92px;height:49px;background:#000;"></div>
<div class="a" style="left:183px;top:535.5px;width:21px;height:20px;border:1px solid #1a8a1a;border-radius:2px;"></div>
<svg class="a" style="left:186px;top:540px" width="15" height="13" viewBox="0 0 15 13"><path d="M7.5 0.5 L8.3 4 L11 3.2 L10.2 5 L13.5 5.2 L10.8 6.6 Q11.5 11.5 7.5 11.8 Q3.5 11.5 4.2 6.6 L1.5 5.2 L4.8 5 L4 3.2 L6.7 4 Z" fill="#fff"/></svg>
<div id="view3d" class="a"></div>
<svg class="a" style="left:0;top:0" width="800" height="591" viewBox="0 0 800 591">
<defs>
<filter id="b05" filterUnits="userSpaceOnUse" x="300" y="130" width="440" height="380"><feGaussianBlur stdDeviation="0.6"/></filter>
<filter id="b1" filterUnits="userSpaceOnUse" x="300" y="130" width="440" height="380"><feGaussianBlur stdDeviation="1.0"/></filter>
<filter id="b15" filterUnits="userSpaceOnUse" x="300" y="130" width="440" height="380"><feGaussianBlur stdDeviation="1.6"/></filter>
<filter id="b2" filterUnits="userSpaceOnUse" x="300" y="130" width="440" height="380"><feGaussianBlur stdDeviation="2.2"/></filter>
<filter id="b3" filterUnits="userSpaceOnUse" x="300" y="130" width="440" height="380"><feGaussianBlur stdDeviation="3.2"/></filter>
<filter id="b4" filterUnits="userSpaceOnUse" x="300" y="130" width="440" height="380"><feGaussianBlur stdDeviation="4.5"/></filter>
<filter id="b7" filterUnits="userSpaceOnUse" x="300" y="130" width="440" height="380"><feGaussianBlur stdDeviation="7"/></filter>
<filter id="b10" filterUnits="userSpaceOnUse" x="300" y="130" width="440" height="380"><feGaussianBlur stdDeviation="11"/></filter>
<clipPath id="cpSil"><path d="M524.5 158.0C528.0 158.2 527.6 157.8 530.0 160.5C532.4 163.2 531.1 156.2 531.6 166.0C532.1 175.8 531.5 174.3 531.6 190.0C531.7 205.7 531.0 201.0 531.8 213.0C532.6 225.0 530.3 217.8 534.0 226.0C537.7 234.2 534.1 230.8 543.0 237.6C551.9 244.4 547.3 243.6 560.8 246.4C574.3 249.2 570.9 247.3 583.6 246.0C596.3 244.7 591.0 243.6 598.8 242.6C606.6 241.6 603.2 243.5 607.0 243.0C610.8 242.5 607.6 243.5 610.3 241.0C613.0 238.5 611.2 238.3 615.0 235.5C618.8 232.7 617.0 232.8 621.7 232.5C626.4 232.2 624.8 231.5 629.0 234.5C633.2 237.5 632.2 235.7 634.4 241.4C636.6 247.1 636.1 244.6 635.6 251.5C635.1 258.4 634.3 256.1 633.0 262.0C631.7 267.9 631.5 264.6 631.8 269.3C632.1 274.0 631.5 271.8 634.0 276.0C636.5 280.2 635.4 278.0 639.4 282.0C643.4 286.0 640.9 284.7 646.0 288.0C651.1 291.3 648.4 289.8 654.7 292.0C661.0 294.2 658.2 293.2 665.0 294.5C671.8 295.8 667.7 295.7 675.0 296.0C682.3 296.3 679.4 295.5 687.0 295.5C694.6 295.5 692.1 295.3 697.8 296.0C703.5 296.7 700.9 295.7 704.0 297.5C707.1 299.3 706.5 298.7 707.0 301.5C707.5 304.3 707.7 303.2 705.5 306.0C703.3 308.8 707.2 306.6 700.4 310.0C693.6 313.4 696.0 311.2 685.0 316.3C674.0 321.4 678.4 318.4 667.4 325.2C656.4 332.0 661.3 328.6 652.0 336.6C642.7 344.6 646.5 340.8 639.4 349.3C632.3 357.8 634.9 355.6 630.6 362.0C626.3 368.4 626.4 363.2 626.5 368.5C626.6 373.8 628.4 370.2 631.0 378.0C633.6 385.8 634.5 378.9 634.4 392.0C634.3 405.1 636.3 400.4 630.8 417.4C625.3 434.4 629.9 426.8 618.0 442.9C606.1 459.0 613.0 453.9 595.2 465.8C577.4 477.7 588.4 472.6 564.6 478.5C540.8 484.4 551.0 484.4 523.8 483.6C496.6 482.8 505.1 482.8 483.0 476.0C460.9 469.2 472.0 474.2 457.6 463.2C443.2 452.2 449.0 457.3 439.7 442.9C430.4 428.5 434.2 435.3 429.6 420.0C425.0 404.7 426.9 411.3 426.0 397.0C425.1 382.7 428.2 386.3 427.0 377.0C425.8 367.7 427.8 377.4 422.5 369.0C417.2 360.6 419.2 360.9 411.2 351.8C403.2 342.7 408.6 347.6 398.5 341.7C388.4 335.8 393.5 338.2 380.8 334.0C368.1 329.8 372.4 331.9 360.5 329.0C348.6 326.1 351.7 327.9 345.2 325.2C338.7 322.5 342.3 324.1 341.0 321.0C339.7 317.9 340.0 318.8 341.4 316.0C342.8 313.2 338.8 314.5 345.2 312.5C351.6 310.5 348.6 311.7 360.5 310.0C372.4 308.3 369.0 309.5 380.8 307.4C392.6 305.3 386.7 307.4 396.0 303.6C405.3 299.8 401.9 302.3 408.7 296.0C415.5 289.7 413.3 293.9 416.3 284.6C419.3 275.3 416.8 277.3 417.6 268.0C418.4 258.7 417.0 263.1 418.8 256.6C420.6 250.1 419.2 252.6 423.0 248.5C426.8 244.4 426.0 245.2 430.3 244.4C434.6 243.6 432.9 244.0 436.0 246.0C439.1 248.0 437.5 247.3 439.5 250.3C441.5 253.3 440.2 254.1 442.0 255.0C443.8 255.9 442.6 253.9 445.0 253.0C447.4 252.1 442.0 252.0 449.3 252.3C456.6 252.6 456.0 253.0 467.0 254.0C478.0 255.0 473.0 256.5 482.3 255.3C491.6 254.1 487.4 254.9 495.0 250.3C502.6 245.7 499.5 248.6 505.0 241.4C510.5 234.2 508.5 238.0 511.5 228.7C514.5 219.4 512.3 227.1 514.0 213.5C515.7 199.9 515.2 204.1 516.5 188.0C517.8 171.9 516.8 174.5 517.8 165.2C518.8 155.9 517.3 162.4 519.5 160.0C521.7 157.6 521.0 157.8 524.5 158.0Z"/></clipPath>
<clipPath id="cpBody"><path d="M427.0 377.0C424.7 387.0 425.1 382.7 426.0 397.0C426.9 411.3 425.0 404.7 429.6 420.0C434.2 435.3 430.4 428.2 439.7 442.9C449.0 457.6 443.2 452.6 457.6 464.2C472.0 475.8 460.9 470.6 483.0 477.8C505.1 485.0 496.6 484.9 523.8 485.8C551.0 486.7 540.8 486.7 564.6 480.5C588.4 474.3 577.4 479.6 595.2 467.3C613.0 455.0 606.1 460.1 618.0 443.5C629.9 426.9 625.3 434.6 630.8 417.4C636.3 400.2 634.3 405.1 634.4 392.0C634.5 378.9 633.9 386.5 631.0 378.0C628.1 369.5 634.2 374.5 625.7 366.4C617.2 358.3 622.4 362.2 605.4 353.7C588.4 345.2 593.5 346.6 574.8 341.0C556.1 335.4 566.3 338.2 549.3 337.0C532.3 335.8 540.8 336.9 523.8 337.4C506.8 337.9 515.4 336.4 498.4 338.4C481.4 340.4 489.9 337.6 472.9 343.5C455.9 349.4 460.7 348.4 447.4 356.2C434.1 364.0 439.8 360.1 433.0 367.0C426.2 373.9 429.3 367.0 427.0 377.0Z"/></clipPath>
<linearGradient id="gWing" x1="0" y1="0" x2="0" y2="1"><stop offset="0" stop-color="#8a8a8a"/><stop offset="0.35" stop-color="#b4b4b4"/><stop offset="0.8" stop-color="#8a8a8a"/><stop offset="1" stop-color="#4a4a4a"/></linearGradient>
</defs>
<g clip-path="url(#cpSil)">
<path d="M524.5 158.0C528.0 158.2 527.6 157.8 530.0 160.5C532.4 163.2 531.1 156.2 531.6 166.0C532.1 175.8 531.5 174.3 531.6 190.0C531.7 205.7 531.0 201.0 531.8 213.0C532.6 225.0 530.3 217.8 534.0 226.0C537.7 234.2 534.1 230.8 543.0 237.6C551.9 244.4 547.3 243.6 560.8 246.4C574.3 249.2 570.9 247.3 583.6 246.0C596.3 244.7 591.0 243.6 598.8 242.6C606.6 241.6 603.2 243.5 607.0 243.0C610.8 242.5 607.6 243.5 610.3 241.0C613.0 238.5 611.2 238.3 615.0 235.5C618.8 232.7 617.0 232.8 621.7 232.5C626.4 232.2 624.8 231.5 629.0 234.5C633.2 237.5 632.2 235.7 634.4 241.4C636.6 247.1 636.1 244.6 635.6 251.5C635.1 258.4 634.3 256.1 633.0 262.0C631.7 267.9 631.5 264.6 631.8 269.3C632.1 274.0 631.5 271.8 634.0 276.0C636.5 280.2 635.4 278.0 639.4 282.0C643.4 286.0 640.9 284.7 646.0 288.0C651.1 291.3 648.4 289.8 654.7 292.0C661.0 294.2 658.2 293.2 665.0 294.5C671.8 295.8 667.7 295.7 675.0 296.0C682.3 296.3 679.4 295.5 687.0 295.5C694.6 295.5 692.1 295.3 697.8 296.0C703.5 296.7 700.9 295.7 704.0 297.5C707.1 299.3 706.5 298.7 707.0 301.5C707.5 304.3 707.7 303.2 705.5 306.0C703.3 308.8 707.2 306.6 700.4 310.0C693.6 313.4 696.0 311.2 685.0 316.3C674.0 321.4 678.4 318.4 667.4 325.2C656.4 332.0 661.3 328.6 652.0 336.6C642.7 344.6 646.5 340.8 639.4 349.3C632.3 357.8 634.9 355.6 630.6 362.0C626.3 368.4 626.4 363.2 626.5 368.5C626.6 373.8 628.4 370.2 631.0 378.0C633.6 385.8 634.5 378.9 634.4 392.0C634.3 405.1 636.3 400.4 630.8 417.4C625.3 434.4 629.9 426.8 618.0 442.9C606.1 459.0 613.0 453.9 595.2 465.8C577.4 477.7 588.4 472.6 564.6 478.5C540.8 484.4 551.0 484.4 523.8 483.6C496.6 482.8 505.1 482.8 483.0 476.0C460.9 469.2 472.0 474.2 457.6 463.2C443.2 452.2 449.0 457.3 439.7 442.9C430.4 428.5 434.2 435.3 429.6 420.0C425.0 404.7 426.9 411.3 426.0 397.0C425.1 382.7 428.2 386.3 427.0 377.0C425.8 367.7 427.8 377.4 422.5 369.0C417.2 360.6 419.2 360.9 411.2 351.8C403.2 342.7 408.6 347.6 398.5 341.7C388.4 335.8 393.5 338.2 380.8 334.0C368.1 329.8 372.4 331.9 360.5 329.0C348.6 326.1 351.7 327.9 345.2 325.2C338.7 322.5 342.3 324.1 341.0 321.0C339.7 317.9 340.0 318.8 341.4 316.0C342.8 313.2 338.8 314.5 345.2 312.5C351.6 310.5 348.6 311.7 360.5 310.0C372.4 308.3 369.0 309.5 380.8 307.4C392.6 305.3 386.7 307.4 396.0 303.6C405.3 299.8 401.9 302.3 408.7 296.0C415.5 289.7 413.3 293.9 416.3 284.6C419.3 275.3 416.8 277.3 417.6 268.0C418.4 258.7 417.0 263.1 418.8 256.6C420.6 250.1 419.2 252.6 423.0 248.5C426.8 244.4 426.0 245.2 430.3 244.4C434.6 243.6 432.9 244.0 436.0 246.0C439.1 248.0 437.5 247.3 439.5 250.3C441.5 253.3 440.2 254.1 442.0 255.0C443.8 255.9 442.6 253.9 445.0 253.0C447.4 252.1 442.0 252.0 449.3 252.3C456.6 252.6 456.0 253.0 467.0 254.0C478.0 255.0 473.0 256.5 482.3 255.3C491.6 254.1 487.4 254.9 495.0 250.3C502.6 245.7 499.5 248.6 505.0 241.4C510.5 234.2 508.5 238.0 511.5 228.7C514.5 219.4 512.3 227.1 514.0 213.5C515.7 199.9 515.2 204.1 516.5 188.0C517.8 171.9 516.8 174.5 517.8 165.2C518.8 155.9 517.3 162.4 519.5 160.0C521.7 157.6 521.0 157.8 524.5 158.0Z" fill="#5c5c5c"/>
<path d="M524.5 158.0C528.0 158.2 527.6 157.8 530.0 160.5C532.4 163.2 531.1 156.2 531.6 166.0C532.1 175.8 531.5 174.3 531.6 190.0C531.7 205.7 531.0 201.0 531.8 213.0C532.6 225.0 530.3 217.8 534.0 226.0C537.7 234.2 534.1 230.8 543.0 237.6C551.9 244.4 547.3 243.6 560.8 246.4C574.3 249.2 570.9 247.3 583.6 246.0C596.3 244.7 591.0 243.6 598.8 242.6C606.6 241.6 603.2 243.5 607.0 243.0C610.8 242.5 607.6 243.5 610.3 241.0C613.0 238.5 611.2 238.3 615.0 235.5C618.8 232.7 617.0 232.8 621.7 232.5C626.4 232.2 624.8 231.5 629.0 234.5C633.2 237.5 632.2 235.7 634.4 241.4C636.6 247.1 636.1 244.6 635.6 251.5C635.1 258.4 634.3 256.1 633.0 262.0C631.7 267.9 631.5 264.6 631.8 269.3C632.1 274.0 631.5 271.8 634.0 276.0C636.5 280.2 635.4 278.0 639.4 282.0C643.4 286.0 640.9 284.7 646.0 288.0C651.1 291.3 648.4 289.8 654.7 292.0C661.0 294.2 658.2 293.2 665.0 294.5C671.8 295.8 667.7 295.7 675.0 296.0C682.3 296.3 679.4 295.5 687.0 295.5C694.6 295.5 692.1 295.3 697.8 296.0C703.5 296.7 700.9 295.7 704.0 297.5C707.1 299.3 706.5 298.7 707.0 301.5C707.5 304.3 707.7 303.2 705.5 306.0C703.3 308.8 707.2 306.6 700.4 310.0C693.6 313.4 696.0 311.2 685.0 316.3C674.0 321.4 678.4 318.4 667.4 325.2C656.4 332.0 661.3 328.6 652.0 336.6C642.7 344.6 646.5 340.8 639.4 349.3C632.3 357.8 634.9 355.6 630.6 362.0C626.3 368.4 626.4 363.2 626.5 368.5C626.6 373.8 628.4 370.2 631.0 378.0C633.6 385.8 634.5 378.9 634.4 392.0C634.3 405.1 636.3 400.4 630.8 417.4C625.3 434.4 629.9 426.8 618.0 442.9C606.1 459.0 613.0 453.9 595.2 465.8C577.4 477.7 588.4 472.6 564.6 478.5C540.8 484.4 551.0 484.4 523.8 483.6C496.6 482.8 505.1 482.8 483.0 476.0C460.9 469.2 472.0 474.2 457.6 463.2C443.2 452.2 449.0 457.3 439.7 442.9C430.4 428.5 434.2 435.3 429.6 420.0C425.0 404.7 426.9 411.3 426.0 397.0C425.1 382.7 428.2 386.3 427.0 377.0C425.8 367.7 427.8 377.4 422.5 369.0C417.2 360.6 419.2 360.9 411.2 351.8C403.2 342.7 408.6 347.6 398.5 341.7C388.4 335.8 393.5 338.2 380.8 334.0C368.1 329.8 372.4 331.9 360.5 329.0C348.6 326.1 351.7 327.9 345.2 325.2C338.7 322.5 342.3 324.1 341.0 321.0C339.7 317.9 340.0 318.8 341.4 316.0C342.8 313.2 338.8 314.5 345.2 312.5C351.6 310.5 348.6 311.7 360.5 310.0C372.4 308.3 369.0 309.5 380.8 307.4C392.6 305.3 386.7 307.4 396.0 303.6C405.3 299.8 401.9 302.3 408.7 296.0C415.5 289.7 413.3 293.9 416.3 284.6C419.3 275.3 416.8 277.3 417.6 268.0C418.4 258.7 417.0 263.1 418.8 256.6C420.6 250.1 419.2 252.6 423.0 248.5C426.8 244.4 426.0 245.2 430.3 244.4C434.6 243.6 432.9 244.0 436.0 246.0C439.1 248.0 437.5 247.3 439.5 250.3C441.5 253.3 440.2 254.1 442.0 255.0C443.8 255.9 442.6 253.9 445.0 253.0C447.4 252.1 442.0 252.0 449.3 252.3C456.6 252.6 456.0 253.0 467.0 254.0C478.0 255.0 473.0 256.5 482.3 255.3C491.6 254.1 487.4 254.9 495.0 250.3C502.6 245.7 499.5 248.6 505.0 241.4C510.5 234.2 508.5 238.0 511.5 228.7C514.5 219.4 512.3 227.1 514.0 213.5C515.7 199.9 515.2 204.1 516.5 188.0C517.8 171.9 516.8 174.5 517.8 165.2C518.8 155.9 517.3 162.4 519.5 160.0C521.7 157.6 521.0 157.8 524.5 158.0Z" fill="#c4c4c4" filter="url(#b2)"/>
<path d="M443.5 254.0C445.5 249.2 441.2 252.4 449.0 252.5C456.8 252.6 455.9 253.2 467.0 254.2C478.1 255.2 473.0 256.7 482.3 255.5C491.6 254.3 487.1 255.2 495.0 250.5C502.9 245.8 500.0 248.7 506.0 241.5C512.0 234.3 510.0 242.8 513.0 229.0C516.0 215.2 514.0 226.3 515.0 200.0C516.0 173.7 510.0 166.7 516.0 150.0C522.0 133.3 527.3 133.3 533.0 150.0C538.7 166.7 532.7 174.7 533.0 200.0C533.3 225.3 530.7 213.4 534.0 226.0C537.3 238.6 534.1 230.9 543.0 237.8C551.9 244.7 547.3 243.8 560.8 246.6C574.3 249.4 570.9 247.5 583.6 246.2C596.3 244.9 591.8 243.7 598.8 242.8C605.8 241.9 601.8 241.5 604.5 243.6C607.2 245.7 606.3 244.2 606.8 249.0C607.3 253.8 606.9 251.7 606.0 258.0C605.1 264.3 606.0 260.0 604.0 268.0C602.0 276.0 604.7 272.7 600.0 282.0C595.3 291.3 595.3 288.0 590.0 296.0C584.7 304.0 588.8 303.7 584.0 306.0C579.2 308.3 582.7 309.0 575.5 303.0C568.3 297.0 571.5 298.3 562.5 288.0C553.5 277.7 557.3 280.0 548.5 272.0C539.7 264.0 544.5 267.0 536.0 264.0C527.5 261.0 531.0 262.5 523.0 263.0C515.0 263.5 519.3 261.5 512.0 265.5C504.7 269.5 508.7 266.8 501.0 275.0C493.3 283.2 496.3 280.0 489.0 290.0C481.7 300.0 485.3 300.3 479.0 305.0C472.7 309.7 477.0 307.0 470.0 304.0C463.0 301.0 465.0 302.0 458.0 296.0C451.0 290.0 453.3 292.0 449.0 286.0C444.7 280.0 447.0 284.3 445.0 278.0C443.0 271.7 443.5 275.0 443.0 267.0C442.5 259.0 441.5 258.8 443.5 254.0Z" fill="#a2a2a2" filter="url(#b05)"/>
<path d="M449.0 262.0C455.3 262.5 455.7 263.2 468.0 263.5C480.3 263.8 475.3 265.2 486.0 263.0C496.7 260.8 491.7 262.7 500.0 257.0C508.3 251.3 507.3 249.7 511.0 246.0" fill="none" stroke="#c0c0c0" stroke-width="11" stroke-linecap="round" stroke-linejoin="round" opacity="1" filter="url(#b2)"/>
<path d="M601.0 254.0C595.3 254.7 597.0 255.3 584.0 256.0C571.0 256.7 574.7 258.3 562.0 256.0C549.3 253.7 554.7 254.3 546.0 249.0C537.3 243.7 539.3 243.0 536.0 240.0" fill="none" stroke="#bcbcbc" stroke-width="11" stroke-linecap="round" stroke-linejoin="round" opacity="1" filter="url(#b2)"/>
<path d="M446.0 256.0C446.3 260.7 446.7 265.3 447.0 270.0" fill="none" stroke="#a8a8a8" stroke-width="3" stroke-linecap="round" stroke-linejoin="round" opacity="1" filter="url(#b1)"/>
<path d="M445.0 277.5C450.0 277.8 449.0 278.3 460.0 278.5C471.0 278.7 466.7 278.8 478.0 278.0C489.3 277.2 488.7 276.7 494.0 276.0" fill="none" stroke="#303030" stroke-width="2.0" stroke-linecap="round" stroke-linejoin="round" opacity="1" filter="url(#b1)"/>
<path d="M604.0 267.0C597.7 267.8 597.7 268.7 585.0 269.5C572.3 270.3 577.0 270.3 566.0 269.5C555.0 268.7 556.7 267.8 552.0 267.0" fill="none" stroke="#303030" stroke-width="2.0" stroke-linecap="round" stroke-linejoin="round" opacity="1" filter="url(#b1)"/>
<path d="M452.0 285.0C457.3 285.3 457.3 286.0 468.0 286.0C478.7 286.0 478.7 285.3 484.0 285.0" fill="none" stroke="#c4c4c4" stroke-width="5" stroke-linecap="round" stroke-linejoin="round" opacity="1" filter="url(#b2)"/>
<path d="M600.0 278.0C594.0 278.3 593.3 279.3 582.0 279.0C570.7 278.7 571.3 277.7 566.0 277.0" fill="none" stroke="#b4b4b4" stroke-width="6" stroke-linecap="round" stroke-linejoin="round" opacity="1" filter="url(#b2)"/>
<path d="M524.5 162.0C524.5 174.7 524.7 175.7 524.5 200.0C524.3 224.3 524.3 216.7 524.0 235.0C523.7 253.3 523.7 248.3 523.5 255.0" fill="none" stroke="#e6e6e6" stroke-width="7" stroke-linecap="round" stroke-linejoin="round" opacity="1" filter="url(#b2)"/>
<path d="M516.0 228.0C513.7 232.7 515.0 233.7 509.0 242.0C503.0 250.3 505.7 247.3 498.0 253.0C490.3 258.7 490.0 257.0 486.0 259.0" fill="none" stroke="#f0f0f0" stroke-width="5" stroke-linecap="round" stroke-linejoin="round" opacity="0.9" filter="url(#b2)"/>
<path d="M534.0 230.0C536.7 234.3 534.7 236.0 542.0 243.0C549.3 250.0 546.0 248.0 556.0 251.0C566.0 254.0 566.7 251.7 572.0 252.0" fill="none" stroke="#e8e8e8" stroke-width="5" stroke-linecap="round" stroke-linejoin="round" opacity="0.85" filter="url(#b2)"/>
<path d="M437.5 249.0C438.3 253.3 437.7 252.0 440.0 262.0C442.3 272.0 440.2 269.3 444.5 279.0C448.8 288.7 446.8 284.3 453.0 291.0C459.2 297.7 457.0 293.7 463.0 299.0C469.0 304.3 468.3 304.3 471.0 307.0" fill="none" stroke="#262626" stroke-width="5" stroke-linecap="round" stroke-linejoin="round" opacity="1" filter="url(#b15)"/>
<path d="M438.5 251.0C439.3 255.3 439.3 256.3 441.0 264.0C442.7 271.7 442.7 270.7 443.5 274.0" fill="none" stroke="#3a3a3a" stroke-width="6" stroke-linecap="round" stroke-linejoin="round" opacity="1" filter="url(#b15)"/>
<path d="M612.0 243.0C612.0 248.0 613.3 247.7 612.0 258.0C610.7 268.3 612.7 264.3 608.0 274.0C603.3 283.7 604.7 280.3 598.0 287.0C591.3 293.7 591.3 291.7 588.0 294.0" fill="none" stroke="#3a3a3a" stroke-width="6" stroke-linecap="round" stroke-linejoin="round" opacity="1" filter="url(#b2)"/>
<path d="M606.0 246.0C605.7 251.3 607.0 253.3 605.0 262.0C603.0 270.7 601.7 268.7 600.0 272.0" fill="none" stroke="#101010" stroke-width="2.5" stroke-linecap="round" stroke-linejoin="round" opacity="1" filter="url(#b1)"/>
<path d="M429.0 248.0C427.8 252.7 425.8 252.7 425.5 262.0C425.2 271.3 424.2 267.3 428.0 276.0C431.8 284.7 429.7 281.0 437.0 288.0C444.3 295.0 441.7 292.0 450.0 297.0C458.3 302.0 455.3 298.7 462.0 303.0C468.7 307.3 467.3 307.7 470.0 310.0" fill="none" stroke="#f4f4f4" stroke-width="4.5" stroke-linecap="round" stroke-linejoin="round" opacity="1" filter="url(#b15)"/>
<path d="M626.0 238.0C627.0 242.7 628.2 241.3 629.0 252.0C629.8 262.7 630.8 258.7 628.5 270.0C626.2 281.3 628.5 277.0 622.0 286.0C615.5 295.0 617.7 291.3 609.0 297.0C600.3 302.7 603.0 298.7 596.0 303.0C589.0 307.3 590.7 307.7 588.0 310.0" fill="none" stroke="#f8f8f8" stroke-width="4" stroke-linecap="round" stroke-linejoin="round" opacity="1" filter="url(#b15)"/>
<path d="M617.0 238.0C617.0 244.0 617.3 244.7 617.0 256.0C616.7 267.3 616.3 266.7 616.0 272.0" fill="none" stroke="#b8b8b8" stroke-width="5" stroke-linecap="round" stroke-linejoin="round" opacity="0.8" filter="url(#b2)"/>
<path d="M634.0 243.0C634.2 247.0 635.2 246.7 634.5 255.0C633.8 263.3 632.2 260.7 632.0 268.0C631.8 275.3 633.3 274.0 634.0 277.0" fill="none" stroke="#6a6a6a" stroke-width="3" stroke-linecap="round" stroke-linejoin="round" opacity="0.8" filter="url(#b1)"/>
<path d="M471.0 322.0C473.8 315.0 471.8 314.7 479.5 301.0C487.2 287.3 484.7 292.7 494.0 281.0C503.3 269.3 500.2 272.2 507.5 266.0C514.8 259.8 510.6 263.8 516.0 262.3C521.4 260.8 518.7 261.5 523.7 261.5C528.7 261.5 525.6 260.9 531.0 262.2C536.4 263.5 532.7 260.2 540.0 265.5C547.3 270.8 543.8 268.5 553.0 278.0C562.2 287.5 558.2 283.3 567.5 294.0C576.8 304.7 574.5 301.3 581.0 310.0C587.5 318.7 585.0 316.7 587.0 320.0" fill="none" stroke="#f4f4f4" stroke-width="3.2" stroke-linecap="round" stroke-linejoin="round" opacity="1" filter="url(#b1)"/>
<path d="M346.0 319.0C354.0 319.3 352.7 318.7 370.0 320.0C387.3 321.3 379.7 319.0 398.0 323.0C416.3 327.0 409.3 324.7 425.0 332.0C440.7 339.3 438.3 340.7 445.0 345.0" fill="none" stroke="#ffffff" stroke-width="9" stroke-linecap="round" stroke-linejoin="round" opacity="1" filter="url(#b3)"/>
<path d="M702.0 302.0C694.7 303.0 695.7 301.7 680.0 305.0C664.3 308.3 671.7 305.7 655.0 312.0C638.3 318.3 645.7 314.7 630.0 324.0C614.3 333.3 615.3 334.7 608.0 340.0" fill="none" stroke="#ffffff" stroke-width="9" stroke-linecap="round" stroke-linejoin="round" opacity="1" filter="url(#b3)"/>
<path d="M432.0 312.0C437.3 317.3 441.3 316.0 448.0 328.0C454.7 340.0 454.7 336.7 452.0 348.0C449.3 359.3 444.0 357.3 440.0 362.0" fill="none" stroke="#f6f6f6" stroke-width="22" stroke-linecap="round" stroke-linejoin="round" opacity="1" filter="url(#b4)"/>
<path d="M622.0 310.0C616.7 315.3 612.0 314.0 606.0 326.0C600.0 338.0 600.7 335.3 604.0 346.0C607.3 356.7 612.0 354.0 616.0 358.0" fill="none" stroke="#f6f6f6" stroke-width="22" stroke-linecap="round" stroke-linejoin="round" opacity="1" filter="url(#b4)"/>
<path d="M400.0 318.0C406.7 320.7 413.3 323.3 420.0 326.0" fill="none" stroke="#ffffff" stroke-width="16" stroke-linecap="round" stroke-linejoin="round" opacity="0.8" filter="url(#b4)"/>
<path d="M462.0 322.0C462.7 327.3 463.3 332.7 464.0 338.0" fill="none" stroke="#f4f4f4" stroke-width="10" stroke-linecap="round" stroke-linejoin="round" opacity="0.9" filter="url(#b3)"/>
<path d="M594.0 320.0C593.3 326.0 592.7 332.0 592.0 338.0" fill="none" stroke="#f4f4f4" stroke-width="10" stroke-linecap="round" stroke-linejoin="round" opacity="0.9" filter="url(#b3)"/>
<path d="M650.0 308.0C644.0 311.3 638.0 314.7 632.0 318.0" fill="none" stroke="#ffffff" stroke-width="16" stroke-linecap="round" stroke-linejoin="round" opacity="0.8" filter="url(#b4)"/>
</g>
<path d="M523.7 262.5C528.7 262.5 525.9 261.9 531.0 263.2C536.1 264.5 532.0 261.2 539.0 266.3C546.0 271.4 542.8 269.1 552.0 278.5C561.2 287.9 557.2 283.9 566.5 294.6C575.8 305.3 573.5 302.2 580.0 310.7C586.5 319.2 584.3 313.9 586.0 320.0C587.7 326.1 587.7 324.2 585.0 329.0C582.3 333.8 585.7 332.0 578.0 334.5C570.3 337.0 580.3 335.5 562.0 336.5C543.7 337.5 547.0 337.4 523.0 337.5C499.0 337.6 504.7 337.6 490.0 336.8C475.3 336.0 484.7 337.3 479.0 335.0C473.3 332.7 475.5 334.7 473.0 330.0C470.5 325.3 469.0 330.7 471.5 321.0C474.0 311.3 472.7 314.1 480.5 301.0C488.3 287.9 485.7 293.2 495.0 281.7C504.3 270.2 501.5 272.6 508.5 266.5C515.5 260.4 510.9 264.6 516.0 263.3C521.1 262.0 518.7 262.5 523.7 262.5Z" fill="#000"/>
<g clip-path="url(#cpBody)">
<path d="M427.0 377.0C424.7 387.0 425.1 382.7 426.0 397.0C426.9 411.3 425.0 404.7 429.6 420.0C434.2 435.3 430.4 428.2 439.7 442.9C449.0 457.6 443.2 452.6 457.6 464.2C472.0 475.8 460.9 470.6 483.0 477.8C505.1 485.0 496.6 484.9 523.8 485.8C551.0 486.7 540.8 486.7 564.6 480.5C588.4 474.3 577.4 479.6 595.2 467.3C613.0 455.0 606.1 460.1 618.0 443.5C629.9 426.9 625.3 434.6 630.8 417.4C636.3 400.2 634.3 405.1 634.4 392.0C634.5 378.9 633.9 386.5 631.0 378.0C628.1 369.5 634.2 374.5 625.7 366.4C617.2 358.3 622.4 362.2 605.4 353.7C588.4 345.2 593.5 346.6 574.8 341.0C556.1 335.4 566.3 338.2 549.3 337.0C532.3 335.8 540.8 336.9 523.8 337.4C506.8 337.9 515.4 336.4 498.4 338.4C481.4 340.4 489.9 337.6 472.9 343.5C455.9 349.4 460.7 348.4 447.4 356.2C434.1 364.0 439.8 360.1 433.0 367.0C426.2 373.9 429.3 367.0 427.0 377.0Z" fill="#6c6c6c"/>
<path d="M427.0 377.0C424.7 387.0 425.1 382.7 426.0 397.0C426.9 411.3 425.0 404.7 429.6 420.0C434.2 435.3 430.4 428.2 439.7 442.9C449.0 457.6 443.2 452.6 457.6 464.2C472.0 475.8 460.9 470.6 483.0 477.8C505.1 485.0 496.6 484.9 523.8 485.8C551.0 486.7 540.8 486.7 564.6 480.5C588.4 474.3 577.4 479.6 595.2 467.3C613.0 455.0 606.1 460.1 618.0 443.5C629.9 426.9 625.3 434.6 630.8 417.4C636.3 400.2 634.3 405.1 634.4 392.0C634.5 378.9 633.9 386.5 631.0 378.0C628.1 369.5 634.2 374.5 625.7 366.4C617.2 358.3 622.4 362.2 605.4 353.7C588.4 345.2 593.5 346.6 574.8 341.0C556.1 335.4 566.3 338.2 549.3 337.0C532.3 335.8 540.8 336.9 523.8 337.4C506.8 337.9 515.4 336.4 498.4 338.4C481.4 340.4 489.9 337.6 472.9 343.5C455.9 349.4 460.7 348.4 447.4 356.2C434.1 364.0 439.8 360.1 433.0 367.0C426.2 373.9 429.3 367.0 427.0 377.0Z" fill="#f2f2f2" filter="url(#b3)"/>
<ellipse cx="530" cy="412" rx="88" ry="58" fill="#fafafa" filter="url(#b7)"/>
<path d="M468.0 346.0C477.0 344.0 476.7 342.3 495.0 340.0C513.3 337.7 504.0 339.3 523.0 339.0C542.0 338.7 532.3 337.3 552.0 339.0C571.7 340.7 572.0 342.3 582.0 344.0" fill="none" stroke="#8e8e8e" stroke-width="6" stroke-linecap="round" stroke-linejoin="round" opacity="0.8" filter="url(#b2)"/>
<path d="M447.0 372.0C454.7 367.3 452.3 364.7 470.0 358.0C487.7 351.3 480.0 352.7 500.0 352.0C520.0 351.3 510.0 356.7 530.0 356.0C550.0 355.3 540.0 350.0 560.0 350.0C580.0 350.0 572.7 348.7 590.0 356.0C607.3 363.3 604.7 366.7 612.0 372.0" fill="none" stroke="#e4e4e4" stroke-width="3" stroke-linecap="round" stroke-linejoin="round" opacity="0.45" filter="url(#b2)"/>
<path d="M450.0 400.0C460.0 397.3 453.3 393.3 480.0 392.0C506.7 390.7 496.7 396.7 530.0 396.0C563.3 395.3 553.3 389.3 580.0 390.0C606.7 390.7 600.0 395.3 610.0 398.0" fill="none" stroke="#e6e6e6" stroke-width="3" stroke-linecap="round" stroke-linejoin="round" opacity="0.4" filter="url(#b3)"/>
<path d="M445.0 430.0C456.7 428.0 451.7 424.7 480.0 424.0C508.3 423.3 496.7 428.7 530.0 428.0C563.3 427.3 551.7 422.0 580.0 422.0C608.3 422.0 603.3 426.0 615.0 428.0" fill="none" stroke="#e6e6e6" stroke-width="3" stroke-linecap="round" stroke-linejoin="round" opacity="0.4" filter="url(#b3)"/>
</g>
<path d="M321.6 506 L321.6 476" stroke="#00008c" stroke-width="1.6"/>
<path d="M321.6 470 L324.1 477.5 L319.1 477.5Z" fill="#1414ff"/>
<path d="M322 506.2 L291 506.2" stroke="#8c0000" stroke-width="1.4"/>
<path d="M285 506.2 L292 504 L292 508.6Z" fill="#ff1414"/>
<circle cx="322.8" cy="509.5" r="3" fill="#0a7a0a"/>
<g font-family="Liberation Sans, sans-serif" font-size="11.5" fill="#f4f4f4"><text x="322" y="476.9">Z</text><text x="292.5" y="507">X</text><text x="324.3" y="509">Y</text></g>
</svg>
<div class="hl" style="left:265px;top:574px;width:535px;height:1.5px;background:#9c9c9c;"></div>
<svg class="a" style="left:253px;top:572.5px" width="12" height="4" viewBox="0 0 12 4"><path d="M0.5 0.5 L4 0.5 L2.2 3Z" fill="#888"/><path d="M6.5 3.5 L11 3.5 L8.7 0.5Z" fill="#111"/></svg>
<div class="hl" style="left:2px;top:577px;width:798px;height:2px;background:#d6d6d6;"></div>
<div class="hl" style="left:2px;top:580px;width:798px;background:#b0b0b0;"></div>
<div class="vl" style="left:672px;top:580px;height:11px;background:#999;"></div>
<div class="vl" style="left:766px;top:580px;height:11px;background:#999;"></div>
<div class="t" style="left:4.6px;top:582.3px;">Loaded Surface</div>
<svg class="a" style="left:789px;top:582px" width="11" height="9" viewBox="0 0 11 9"><path d="M0.5 9 L0.5 2 L11 2" fill="none" stroke="#ccc" stroke-width="0.8"/><path d="M4 9 L11 3.5 M7.5 9 L11 6.3" stroke="#999" stroke-width="0.8"/></svg>
</body></html>
